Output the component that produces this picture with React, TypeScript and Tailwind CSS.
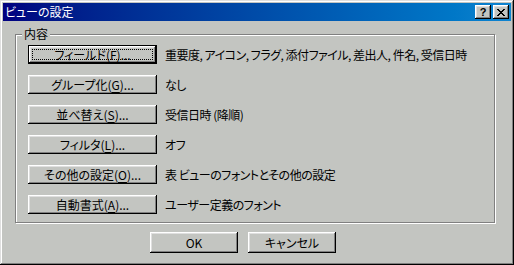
import React from "react";

const font = "font-['Noto_Sans_CJK_JP','Noto_Sans',sans-serif] [font-feature-settings:'palt']";

function Btn({ label, hot, isDefault, w = "w-[129px]", h = "h-[19px]" }: { label: string; hot?: string; isDefault?: boolean; w?: string; h?: string }) {
  let content: React.ReactNode = label;
  if (hot) {
    const i = label.indexOf("(" + hot + ")");
    content = (
      <>
        {label.slice(0, i + 1)}
        <span className="underline underline-offset-[2px]">{hot}</span>
        {label.slice(i + 2)}
      </>
    );
  }
  const bevel =
    "shadow-[inset_-1px_-1px_#000000,inset_1px_1px_#ffffff,inset_-2px_-2px_#808080,inset_2px_2px_#dfdfdf]";
  if (isDefault) {
    return (
      <div className={`${w} ${h} border border-black shrink-0`}>
        <div className={`relative w-full h-full flex items-center justify-center ${bevel}`}>
          <span className="leading-none">{content}</span>
          <div className="absolute inset-[3px] border border-dotted border-black" />
        </div>
      </div>
    );
  }
  return (
    <div className={`${w} ${h} shrink-0 flex items-center justify-center ${bevel}`}>
      <span className="leading-none">{content}</span>
    </div>
  );
}

const rows = [
  { label: "フィールド(F)...", hot: "F", text: "重要度, アイコン, フラグ, 添付ファイル, 差出人, 件名, 受信日時", def: true },
  { label: "グループ化(G)...", hot: "G", text: "なし" },
  { label: "並べ替え(S)...", hot: "S", text: "受信日時 (降順)" },
  { label: "フィルタ(L)...", hot: "L", text: "オフ" },
  { label: "その他の設定(O)...", hot: "O", text: "表 ビューのフォントとその他の設定" },
  { label: "自動書式(A)...", hot: "A", text: "ユーザー定義のフォント" },
];

export default function App() {
  return (
    <div
      className={`w-[514px] h-[265px] bg-[#c3c5c1] p-[3px] flex flex-col text-[12px] text-black ${font} shadow-[inset_-1px_-1px_#000000,inset_1px_1px_#dfdfdf,inset_-2px_-2px_#808080,inset_2px_2px_#ffffff]`}
    >
      {/* title bar */}
      <div className="h-[18px] bg-gradient-to-r from-[#000080] to-[#1084d0] flex items-center pl-[2px] pr-[2px]">
        <span className="flex-1 text-white leading-none">ビューの設定</span>
        <div className="w-[16px] h-[14px] bg-[#c3c5c1] flex items-center justify-center shadow-[inset_-1px_-1px_#000000,inset_1px_1px_#ffffff,inset_-2px_-2px_#808080,inset_2px_2px_#dfdfdf]">
          <span className="font-['Liberation_Sans',sans-serif] font-bold text-[11px] leading-none">?</span>
        </div>
        <div className="ml-[2px] w-[16px] h-[14px] bg-[#c3c5c1] flex items-center justify-center shadow-[inset_-1px_-1px_#000000,inset_1px_1px_#ffffff,inset_-2px_-2px_#808080,inset_2px_2px_#dfdfdf]">
          <svg width="8" height="7" viewBox="0 0 8 7" shapeRendering="crispEdges">
            <path d="M0 0h2v1h-2zM6 0h2v1h-2zM1 1h2v1h-2zM5 1h2v1h-2zM2 2h4v1h-4zM3 3h2v1h-2zM2 4h4v1h-4zM1 5h2v1h-2zM5 5h2v1h-2zM0 6h2v1h-2zM6 6h2v1h-2z" fill="#000" />
          </svg>
        </div>
      </div>

      {/* group box */}
      <div className="relative mt-[13px] ml-[12px] w-[480px] h-[189px] border border-[#808080] shadow-[1px_1px_#ffffff,inset_1px_1px_#ffffff]">
        <span className="absolute -top-[8px] left-[6px] px-[2px] bg-[#c3c5c1] leading-[14px]">内容</span>
        <div className="flex flex-col gap-[11px] pt-[10px] pl-[12px]">
          {rows.map((r) => (
            <div key={r.label} className="flex items-center gap-[8px]">
              <Btn label={r.label} hot={r.hot} isDefault={r.def} />
              <span className="leading-none tracking-[-0.5px]">{r.text}</span>
            </div>
          ))}
        </div>
      </div>

      {/* footer buttons */}
      <div className="flex gap-[10px] mt-[9px] ml-[147px]">
        <Btn label="OK" w="w-[88px]" h="h-[21px]" />
        <Btn label="キャンセル" w="w-[88px]" h="h-[21px]" />
      </div>
    </div>
  );
}
